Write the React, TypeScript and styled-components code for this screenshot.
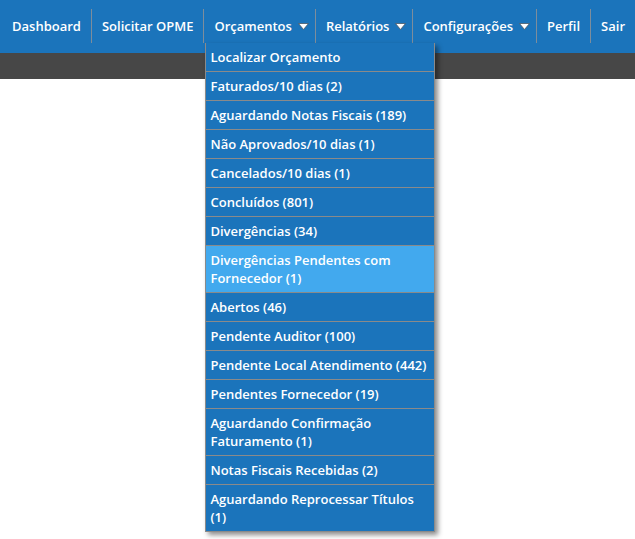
import styled, { createGlobalStyle } from "styled-components";

const GlobalStyle = createGlobalStyle`
    html, body {
        margin: 0;
        padding: 0;
        background: #ffffff;
    }
    body {
        font-family: "Open Sans", "Noto Sans", sans-serif;
    }
`

const menuItems = [
    "Localizar Orçamento",
    "Faturados/10 dias (2)",
    "Aguardando Notas Fiscais (189)",
    "Não Aprovados/10 dias (1)",
    "Cancelados/10 dias (1)",
    "Concluídos (801)",
    "Divergências (34)",
    "Divergências Pendentes com Fornecedor (1)",
    "Abertos (46)",
    "Pendente Auditor (100)",
    "Pendente Local Atendimento (442)",
    "Pendentes Fornecedor (19)",
    "Aguardando Confirmação Faturamento (1)",
    "Notas Fiscais Recebidas (2)",
    "Aguardando Reprocessar Títulos (1)",
]

function Arrow() {
    return (
        <ArrowIcon width="11" height="7" viewBox="0 0 11 7">
            <polygon points="0.5,0.5 10.5,0.5 5.5,6.5" fill="#ffffff" stroke="#4a5866" strokeWidth="0.8" />
        </ArrowIcon>
    )
}

export default function App() {
    const active = "Divergências Pendentes com Fornecedor (1)";

    return (
        <>
            <GlobalStyle />
            <Page>
                <NavBar>
                    <NavList>
                        <NavItem>Dashboard</NavItem>
                        <NavItem>Solicitar OPME</NavItem>
                        <NavItem $hasMenu>
                            Orçamentos <Arrow />
                            <Dropdown>
                                {menuItems.map((item) => (
                                    <DropdownItem key={item} $active={item === active}>{item}</DropdownItem>
                                ))}
                            </Dropdown>
                        </NavItem>
                        <NavItem $hasMenu>Relatórios <Arrow /></NavItem>
                        <NavItem $hasMenu>Configurações <Arrow /></NavItem>
                        <NavItem>Perfil</NavItem>
                        <NavItem $last>Sair</NavItem>
                    </NavList>
                </NavBar>
                <SubBar />
                <Content />
            </Page>
        </>
    )
}

const Page = styled.div`
    width: 635px;
    height: 539px;
    overflow: hidden;
    background: #ffffff;
`

const NavBar = styled.div`
    height: 53px;
    background: #1b74bb;
    display: flex;
    justify-content: flex-end;
`

const NavList = styled.ul`
    list-style: none;
    margin: 9px 0 0 0;
    padding: 0;
    display: flex;
    height: 34px;
`

const NavItem = styled.li<{ $last?: boolean; $hasMenu?: boolean }>`
    position: relative;
    display: flex;
    align-items: center;
    gap: 6px;
    padding: 0 ${(p) => (p.$hasMenu ? "6px" : "10px")} 0 10px;
    height: 34px;
    border-right: ${(p) => (p.$last ? "none" : "1px solid #7d8d9c")};
    color: #ffffff;
    font-size: 13px;
    font-weight: 600;
    white-space: nowrap;
`

const ArrowIcon = styled.svg`
    display: block;
    margin-top: 1px;
`

const Dropdown = styled.ul`
    position: absolute;
    top: 34px;
    left: 1px;
    width: 230px;
    margin: 0;
    padding: 0;
    list-style: none;
    box-sizing: border-box;
    border: 1px solid #8a8a8a;
    border-top: none;
    background: #1b74bb;
    box-shadow: 3px 3px 5px rgba(0, 0, 0, 0.45);
    z-index: 10;
`

const DropdownItem = styled.li<{ $active?: boolean }>`
    padding: 5px 7px 5px 4px;
    line-height: 18px;
    font-size: 13px;
    font-weight: 600;
    color: #ffffff;
    white-space: normal;
    background: ${(p) => (p.$active ? "#42a9ee" : "#1b74bb")};
    border-bottom: 1px solid #8a8a8a;

    &:last-child {
        border-bottom: none;
    }
`

const SubBar = styled.div`
    height: 26px;
    background: #474747;
`

const Content = styled.div`
    height: 460px;
    background: #ffffff;
`
